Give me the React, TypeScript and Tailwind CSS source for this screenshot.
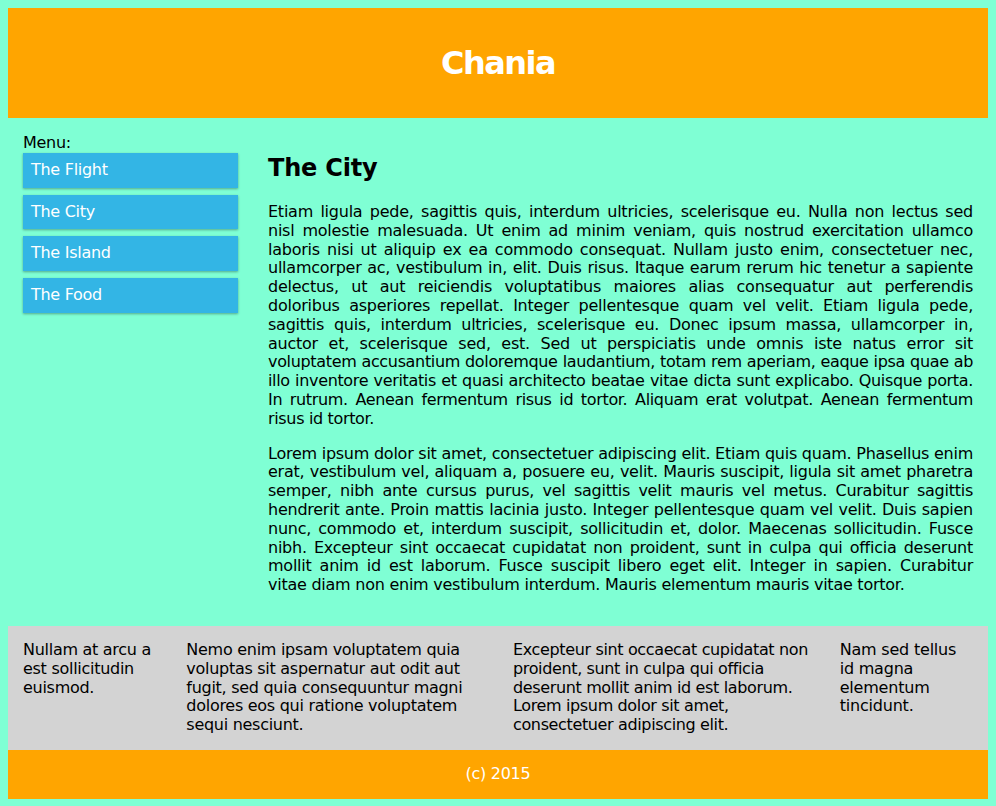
import React from "react";

const MENU = ["The Flight", "The City", "The Island", "The Food"];

const ASIDES = [
  { w: "w-1/6 tracking-[-0.28px]", text: "Nullam at arcu a est sollicitudin euismod." },
  {
    w: "w-1/3 tracking-[-0.28px]",
    text: "Nemo enim ipsam voluptatem quia voluptas sit aspernatur aut odit aut fugit, sed quia consequuntur magni dolores eos qui ratione voluptatem sequi nesciunt.",
  },
  {
    w: "w-1/3 tracking-[-0.36px]",
    text: "Excepteur sint occaecat cupidatat non proident, sunt in culpa qui officia deserunt mollit anim id est laborum. Lorem ipsum dolor sit amet, consectetuer adipiscing elit.",
  },
  { w: "w-1/6 tracking-[-0.2px]", text: "Nam sed tellus id magna elementum tincidunt." },
];

export default function App() {
  return (
    <div
      className="min-h-screen bg-[#7FFFD4] p-2 text-[16px] leading-[18.8px] tracking-[-0.28px] text-black"
      style={{ fontFamily: '"DejaVu Sans", Verdana, sans-serif' }}
    >
      {/* Header */}
      <div className="bg-[#FFA500] p-[15px] text-center text-white">
        <h1 className="my-[21px] text-[32px] font-bold leading-[38px] tracking-[-1.5px]">Chania</h1>
      </div>

      {/* Menu + main content */}
      <div className="flex">
        <div className="w-1/4 p-[15px] pt-[16px]">
          <div>Menu:</div>
          <ul>
            {MENU.map((item) => (
              <li
                key={item}
                className="mb-[7px] bg-[#33B5E5] p-2 text-white shadow-[0_1px_3px_rgba(0,0,0,0.12),0_1px_2px_rgba(0,0,0,0.24)]"
              >
                {item}
              </li>
            ))}
          </ul>
        </div>

        <div className="w-3/4 p-[15px]">
          <h1 className="mt-[21px] mb-[21px] text-[24px] font-bold leading-[28px] tracking-[-0.2px]">The City</h1>
          <p className="mb-4 text-justify tracking-[-0.24px]">
            Etiam ligula pede, sagittis quis, interdum ultricies, scelerisque eu. Nulla non lectus sed nisl molestie
            malesuada. Ut enim ad minim veniam, quis nostrud exercitation ullamco laboris nisi ut aliquip ex ea commodo
            consequat. Nullam justo enim, consectetuer nec, ullamcorper ac, vestibulum in, elit. Duis risus. Itaque
            earum rerum hic tenetur a sapiente delectus, ut aut reiciendis voluptatibus maiores alias consequatur aut
            perferendis doloribus asperiores repellat. Integer pellentesque quam vel velit. Etiam ligula pede, sagittis
            quis, interdum ultricies, scelerisque eu. Donec ipsum massa, ullamcorper in, auctor et, scelerisque sed,
            est. Sed ut perspiciatis unde omnis iste natus error sit{" "}
            <span className="tracking-[-0.34px]">
              voluptatem accusantium doloremque laudantium, totam rem aperiam, eaque ipsa quae ab illo inventore
              veritatis et quasi architecto beatae vitae dicta sunt explicabo. Quisque porta. In rutrum. Aenean
              fermentum risus id tortor. Aliquam erat volutpat. Aenean fermentum risus id tortor.
            </span>
          </p>
          <p className="mb-4 text-justify tracking-[-0.25px]">
            Lorem ipsum dolor sit amet, consectetuer adipiscing elit. Etiam quis quam. Phasellus enim erat, vestibulum
            vel, aliquam a, posuere eu, velit. Mauris suscipit, ligula sit amet pharetra semper, nibh ante cursus
            purus, vel sagittis velit mauris vel metus. Curabitur sagittis hendrerit ante. Proin mattis lacinia justo.
            Integer pellentesque quam vel velit. Duis sapien nunc, commodo et, interdum suscipit, sollicitudin et,
            dolor. Maecenas sollicitudin. Fusce nibh. Excepteur sint occaecat cupidatat non proident, sunt in culpa qui
            officia deserunt mollit anim id est laborum. Fusce suscipit libero eget elit. Integer in sapien. Curabitur
            vitae diam non enim vestibulum interdum. Mauris elementum mauris vitae tortor.
          </p>
        </div>
      </div>

      {/* Asides */}
      <div className="flex bg-[#D3D3D3]">
        {ASIDES.map((a, i) => (
          <div key={i} className={`${a.w} p-[15px]`}>
            <p>{a.text}</p>
          </div>
        ))}
      </div>

      {/* Footer */}
      <div className="bg-[#FFA500] p-[15px] text-center text-white">
        <p>(c) 2015</p>
      </div>
    </div>
  );
}
